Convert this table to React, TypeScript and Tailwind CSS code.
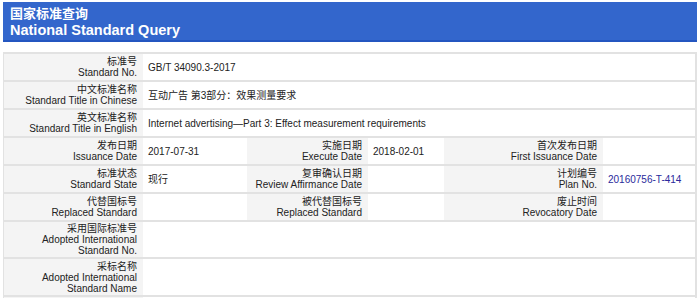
const FONT = "font-['Liberation_Sans','Noto_Sans_CJK_SC',sans-serif]";

function Label({ zh, en }: { zh: string; en: string[] }) {
  return (
    <div className="flex flex-col justify-center bg-[#f4f4f4] pr-[6px] text-right leading-[11px] text-[#222]">
      <span>{zh}</span>
      {en.map((l) => (
        <span key={l}>{l}</span>
      ))}
    </div>
  );
}

function Value({ children, cls = '' }: { children?: React.ReactNode; cls?: string }) {
  return <div className={`flex items-center pl-[5px] text-[#222] ${cls}`}>{children}</div>;
}

export default function App() {
  return (
    <div className={`${FONT} bg-white w-[700px] h-[298px] overflow-hidden pt-[2px] text-[10px]`}>
      <div className="mx-[3px] h-[40px] bg-[#3366cc] border-b-2 border-[#2456c0] pl-[7px] pt-[4px] text-white font-bold">
        <div className="text-[13px] leading-[16px]">国家标准查询</div>
        <div className="text-[14.5px] leading-[17px]">National Standard Query</div>
      </div>

      <div className="mt-[10px] mx-[3px] w-[694px] border-l border-r-2 border-t-2 border-[#e2e2e2]">
        <div className="grid grid-cols-[139px_1fr] h-[28px] border-b-2 border-[#e2e2e2]">
          <Label zh="标准号" en={['Standard No.']} />
          <Value>GB/T 34090.3-2017</Value>
        </div>
        <div className="grid grid-cols-[139px_1fr] h-[28px] border-b-2 border-[#e2e2e2]">
          <Label zh="中文标准名称" en={['Standard Title in Chinese']} />
          <Value>互动广告 第3部分：效果测量要求</Value>
        </div>
        <div className="grid grid-cols-[139px_1fr] h-[28px] border-b-2 border-[#e2e2e2]">
          <Label zh="英文标准名称" en={['Standard Title in English']} />
          <Value>Internet advertising—Part 3: Effect measurement requirements</Value>
        </div>
        <div className="grid grid-cols-[139px_104px_121px_76px_159px_1fr] h-[28px] border-b-2 border-[#e2e2e2]">
          <Label zh="发布日期" en={['Issuance Date']} />
          <Value>2017-07-31</Value>
          <Label zh="实施日期" en={['Execute Date']} />
          <Value>2018-02-01</Value>
          <Label zh="首次发布日期" en={['First Issuance Date']} />
          <Value />
        </div>
        <div className="grid grid-cols-[139px_104px_121px_76px_159px_1fr] h-[28px] border-b-2 border-[#e2e2e2]">
          <Label zh="标准状态" en={['Standard State']} />
          <Value cls="items-start pt-[6px]">现行</Value>
          <Label zh="复审确认日期" en={['Review Affirmance Date']} />
          <Value />
          <Label zh="计划编号" en={['Plan No.']} />
          <Value cls="!text-[#2a2a9c]">20160756-T-414</Value>
        </div>
        <div className="grid grid-cols-[139px_104px_121px_76px_159px_1fr] h-[28px] border-b-2 border-[#e2e2e2]">
          <Label zh="代替国标号" en={['Replaced Standard']} />
          <Value />
          <Label zh="被代替国标号" en={['Replaced Standard']} />
          <Value />
          <Label zh="废止时间" en={['Revocatory Date']} />
          <Value />
        </div>
        <div className="grid grid-cols-[139px_1fr] h-[37px] border-b-2 border-[#e2e2e2]">
          <Label zh="采用国际标准号" en={['Adopted International', 'Standard No.']} />
          <Value />
        </div>
        <div className="grid grid-cols-[139px_1fr] h-[38px] border-b-2 border-[#e2e2e2]">
          <Label zh="采标名称" en={['Adopted International', 'Standard Name']} />
          <Value />
        </div>
        <div className="grid grid-cols-[139px_1fr] h-[28px]">
          <div className="bg-[#f4f4f4]" />
          <Value />
        </div>
      </div>
    </div>
  );
}
